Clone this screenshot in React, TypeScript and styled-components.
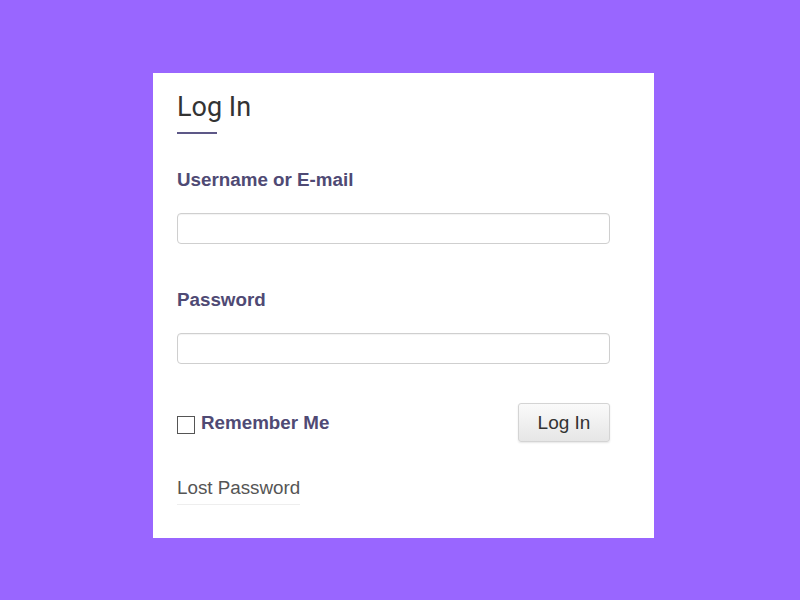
import React from 'react';
import styled, { createGlobalStyle } from 'styled-components';

const GlobalStyle = createGlobalStyle`
  html, body {
    margin: 0;
    padding: 0;
    background: #9966ff;
  }
  body {
    font-family: 'Liberation Sans', Arial, sans-serif;
  }
`;

const Page = styled.div`
  width: 800px;
  height: 600px;
  box-sizing: border-box;
  padding-top: 73px;
  display: flex;
  justify-content: center;
`;

const Card = styled.form`
  width: 501px;
  height: 465px;
  box-sizing: border-box;
  background: #fff;
  padding: 18px 44px 0 24px;
  margin-left: 7px;
`;

const Title = styled.h1`
  margin: 0;
  font-family: Roboto, 'Liberation Sans', sans-serif;
  font-weight: 400;
  font-size: 27px;
  line-height: 32px;
  color: #333;
  &::after {
    content: '';
    display: block;
    width: 40px;
    height: 2px;
    margin-top: 9px;
    background: #5d5887;
  }
`;

const Field = styled.div<{ $top: number }>`
  margin-top: ${(p) => p.$top}px;
  display: flex;
  flex-direction: column;
`;

const Label = styled.label`
  font-weight: 700;
  font-size: 18.8px;
  line-height: 20px;
  color: #4f4a74;
`;

const Input = styled.input`
  margin-top: 23px;
  width: 433px;
  height: 31px;
  box-sizing: border-box;
  border: 1px solid #cfcfcf;
  border-radius: 4px;
  box-shadow: inset 0 1px 1px rgba(0, 0, 0, 0.05);
  outline: none;
`;

const ActionRow = styled.div`
  margin-top: 39px;
  width: 433px;
  display: flex;
  align-items: center;
  justify-content: space-between;
`;

const Remember = styled.label`
  display: flex;
  align-items: center;
  gap: 6px;
  font-weight: 700;
  font-size: 18.8px;
  color: #4f4a74;
`;

const Box = styled.span`
  width: 16px;
  height: 16px;
  border: 1px solid #555;
  background: #fff;
  margin-top: 5px;
`;

const Button = styled.button`
  width: 92px;
  height: 39px;
  border: 1px solid #d4d4d4;
  border-radius: 3px;
  background: linear-gradient(#fafafa, #e6e6e6);
  box-shadow: 0 1px 2px rgba(0, 0, 0, 0.1);
  font-family: 'Liberation Sans', Arial, sans-serif;
  font-size: 19px;
  color: #333;
  padding: 0;
`;

const Lost = styled.a`
  display: inline-block;
  margin-top: 35px;
  font-size: 18.8px;
  line-height: 22px;
  color: #555;
  text-decoration: none;
  padding-bottom: 5px;
  border-bottom: 1px solid #eee;
`;

const App: React.FC = () => (
  <>
    <GlobalStyle />
    <Page>
      <Card onSubmit={(e) => e.preventDefault()}>
        <Title>Log In</Title>
        <Field $top={36}>
          <Label>Username or E-mail</Label>
          <Input type="text" />
        </Field>
        <Field $top={46}>
          <Label>Password</Label>
          <Input type="password" />
        </Field>
        <ActionRow>
          <Remember>
            <Box />
            Remember Me
          </Remember>
          <Button type="submit">Log In</Button>
        </ActionRow>
        <Lost href="#">Lost Password</Lost>
      </Card>
    </Page>
  </>
);

export default App;
